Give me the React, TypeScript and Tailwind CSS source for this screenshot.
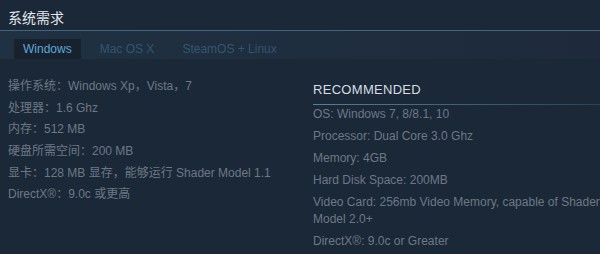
const minimum = [
  "操作系统：Windows Xp，Vista，7",
  "处理器：1.6 Ghz",
  "内存：512 MB",
  "硬盘所需空间：200 MB",
  "显卡：128 MB 显存，能够运行 Shader Model 1.1",
  "DirectX®：9.0c 或更高",
];

const recommended = [
  "OS: Windows 7, 8/8.1, 10",
  "Processor: Dual Core 3.0 Ghz",
  "Memory: 4GB",
  "Hard Disk Space: 200MB",
  "Video Card: 256mb Video Memory, capable of Shader Model 2.0+",
  "DirectX®: 9.0c or Greater",
];

const tabs = ["Windows", "Mac OS X", "SteamOS + Linux"];

export default function App() {
  return (
    <div
      className="w-[600px] h-[254px] overflow-hidden bg-[#1b2838]"
      style={{ fontFamily: '"Liberation Sans", Arial, "Noto Sans CJK SC", sans-serif' }}
    >
      <h2 className="px-2 pt-[10px] h-[30px] text-[14px] leading-[17px] text-[#e4e9ee]">系统需求</h2>

      <div className="h-[29px] border-t border-[#3f6580] bg-gradient-to-r from-[#1f3142] to-[#1e2a3c] pl-[14px] pt-[8px] flex items-end">
        {tabs.map((t, i) => (
          <div
            key={t}
            className={
              i === 0
                ? "h-[20px] px-[9px] flex items-center bg-[#18222f] text-[#5ba8d8] text-[12px]"
                : "h-[20px] px-[9px] ml-[10px] flex items-center text-[#34556f] text-[12px]"
            }
          >
            {t}
          </div>
        ))}
      </div>

      <div className="flex pl-2 pt-[18px]">
        <ul className="w-[305px] shrink-0">
          {minimum.map((m) => (
            <li key={m} className="text-[12px] leading-[18px] mb-[3.7px] text-[#6d7885]">
              {m}
            </li>
          ))}
        </ul>
        <div className="w-[292px] shrink-0">
          <div className="pt-[5px] text-[13px] leading-[16px] text-[#d6dde3] tracking-[0.3px] uppercase">
            Recommended
          </div>
          <div className="mt-[6px] h-px bg-gradient-to-r from-[#5a7e99] to-[#2c4156]" />
          <ul className="pt-[1px]">
            {recommended.map((r) => (
              <li key={r} className="text-[12px] leading-[17px] mb-[5px] text-[#6d7885]">
                {r}
              </li>
            ))}
          </ul>
        </div>
      </div>
    </div>
  );
}
